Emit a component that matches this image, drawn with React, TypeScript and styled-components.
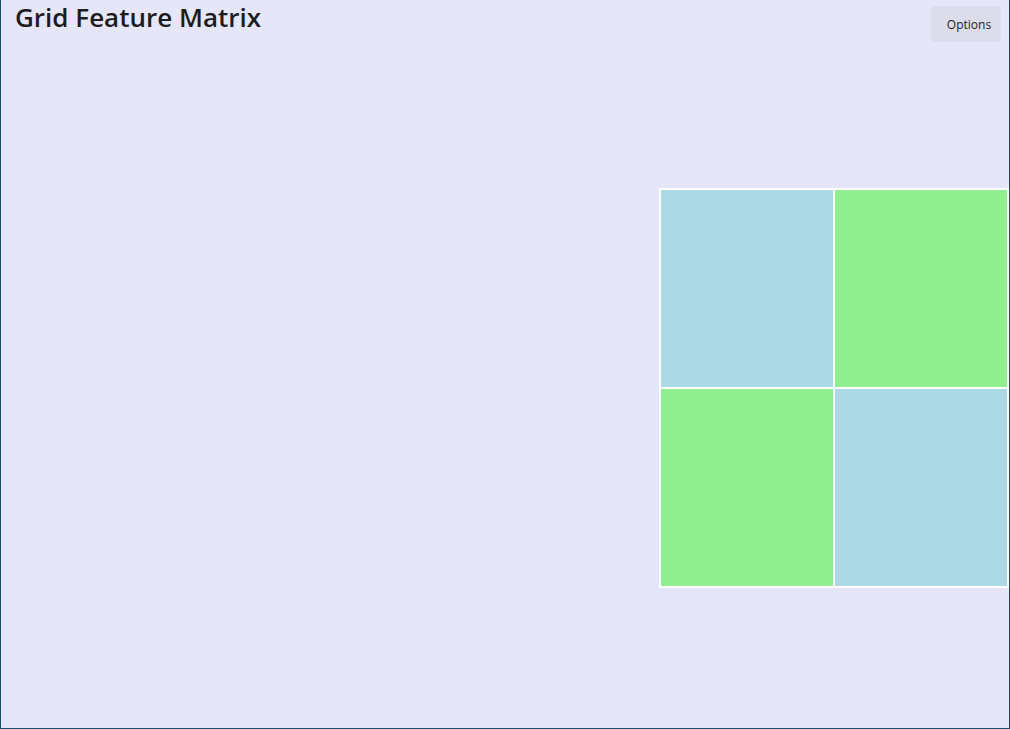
import React from 'react'
import styled, { createGlobalStyle } from 'styled-components'

const GlobalStyle = createGlobalStyle`
  html, body {
    margin: 0;
    padding: 0;
    background: #e6e6fa;
  }
`

const cells = ['#add8e6', '#90ee90', '#90ee90', '#add8e6']

const App = () => {
  return (
    <>
      <GlobalStyle />
      <Window>
        <Header>
          <Title>Grid Feature Matrix</Title>
          <OptionsButton>Options</OptionsButton>
        </Header>
        <Body>
          <Matrix>
            {cells.map((c, i) => (
              <Cell key={i} $color={c} />
            ))}
          </Matrix>
        </Body>
      </Window>
    </>
  )
}

export default App

const Window = styled.div`
  box-sizing: border-box;
  height: 729px;
  display: flex;
  flex-direction: column;
  background: #e6e6fa;
  border: 1px solid #17506a;
  border-top: none;
  font-family: 'Open Sans', 'Noto Sans', sans-serif;
`

const Header = styled.div`
  height: 48px;
  display: flex;
  justify-content: space-between;
  align-items: flex-start;
`

const Title = styled.h1`
  margin: 0;
  padding: 0 0 0 14px;
  font-size: 26px;
  font-weight: 600;
  line-height: 34px;
  color: #1c1c1c;
`

const OptionsButton = styled.button`
  margin: 6px 8px 0 0;
  width: 70px;
  height: 36px;
  border: none;
  border-radius: 4px;
  background: #dcdcec;
  font-family: 'Open Sans', 'Noto Sans', sans-serif;
  font-size: 12px;
  color: #1c1c1c;
  padding: 0 0 0 6px;
`

const Body = styled.div`
  flex: 1;
  display: flex;
  align-items: center;
  justify-content: flex-end;
`

const Matrix = styled.div`
  display: grid;
  grid-template-columns: 172px 172px;
  grid-template-rows: 197px 197px;
  gap: 2px;
  padding: 2px;
  background: #ffffff;
`

const Cell = styled.div<{ $color: string }>`
  background: ${p => p.$color};
`
